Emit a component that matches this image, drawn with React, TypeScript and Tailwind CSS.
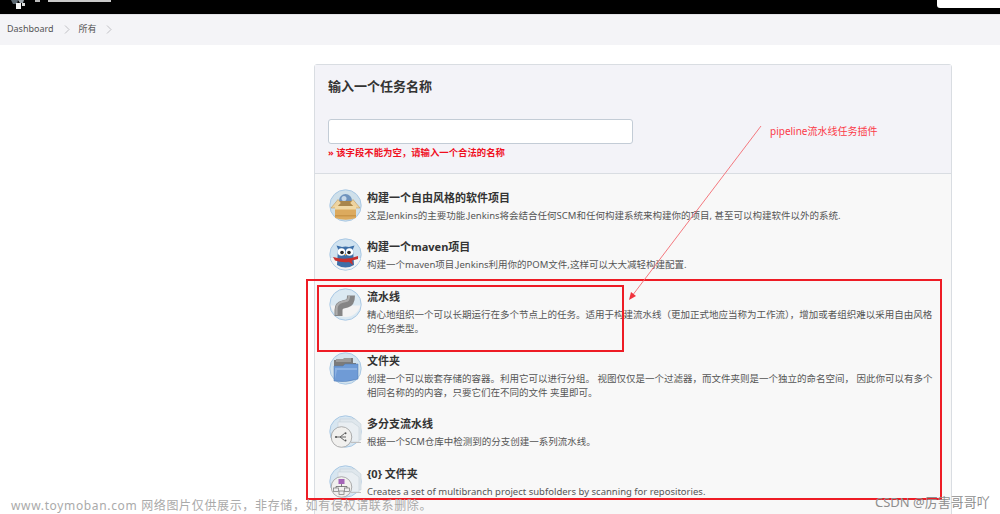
import React from "react";

const cjk = { fontFamily: '"Noto Sans", "Noto Sans CJK SC", sans-serif' };

function Ring({ children, bg = "#dbe9f2" }: { children: React.ReactNode; bg?: string }) {
  return (
    <svg width="33" height="33" viewBox="0 0 33 33" className="shrink-0 block">
      <circle cx="16.5" cy="16.5" r="15.7" fill={bg} stroke="#a9c8e4" strokeWidth="1" />
      {children}
    </svg>
  );
}

const FreeIcon = () => (
  <Ring bg="#cfe0ea">
    <circle cx="16.5" cy="11.5" r="6.5" fill="#6f93bd" />
    <circle cx="15" cy="9.5" r="2.5" fill="#c5d7e8" />
    <path d="M7 17 L10 12 H23 L26 17 Z" fill="#a8864c" />
    <path d="M2 19 L9 10.5 L12 14 L7 19 Z" fill="#edd3a0" stroke="#b98f4a" strokeWidth=".5" />
    <path d="M31 19 L24 10.5 L21 14 L26 19 Z" fill="#edd3a0" stroke="#b98f4a" strokeWidth=".5" />
    <path d="M6 17 H27 V29 Q17 32.5 6 29 Z" fill="#dcaa5e" />
    <rect x="6" y="17" width="21" height="3.5" fill="#f0d9a6" />
    <rect x="6" y="26" width="21" height="1.5" fill="#c99548" />
  </Ring>
);
const MavenIcon = () => (
  <Ring bg="#cfe2f0">
    <path d="M1.5 20 H31.5 A15.5 15.5 0 0 1 1.5 20 Z" fill="#f4f4f4" />
    <path d="M9 11 L7.5 7.5 L13 9 Q16.5 8 20 9 L25.5 7.5 L24 11 L25 27 Q16.5 32 8 27 Z" fill="#3d6fa8" />
    <circle cx="12.5" cy="14" r="3.8" fill="#fff" />
    <circle cx="20.5" cy="14" r="3.8" fill="#fff" />
    <circle cx="13" cy="14.5" r="1.8" fill="#222" />
    <circle cx="20" cy="14.5" r="1.8" fill="#222" />
    <path d="M15.5 16 L17.5 16 L16.5 18 Z" fill="#e8a33a" />
    <path d="M4 19 Q16.5 23 29 18 L29 21 L23 22.5 L24 27 L20 24 Q13 25 6 22.5 Z" fill="#c8302e" />
  </Ring>
);
const PipeIcon = () => (
  <Ring bg="#dbe9f2">
    <path d="M1.5 17.5 H31.5 A15.5 15.5 0 0 1 1.5 17.5 Z" fill="#f3f3f3" />
    <path d="M9.5 28 L9.5 22 Q9.5 17.5 14 16.5 L18 15.5 Q22 14.5 22 7.5" stroke="#858585" strokeWidth="8" fill="none" />
    <path d="M7.5 27 L7.5 21 Q7.5 15.5 13 14 L17 13 Q20 12.5 20 8" stroke="#adadad" strokeWidth="2.2" fill="none" />
  </Ring>
);
const FolderIcon = () => (
  <Ring bg="#d3e3ee">
    <path d="M5 8 H14 L16 6 H24 V11 H27 V24 H5 Z" fill="#7b7b7b" />
    <path d="M7 7 H14 L15 6 H22 V10 H7 Z" fill="#9a9a9a" />
    <path d="M5 29 L5 14 H14 L16 12 H29 V27 Q17 31 5 29 Z" fill="#6f9bd6" stroke="#4f78b0" strokeWidth=".5" />
    <path d="M6 27 L6 16 H28 V18 H8 Z" fill="#8cb1e2" />
  </Ring>
);
const StackBase = () => (
  <>
    <path d="M11 4 H26 L32 9 V25 H11 Z" fill="#dfe7ed" stroke="#c6d1d9" strokeWidth=".6" />
    <path d="M9 7 H23 L30 12 V27 H9 Z" fill="#e9eef2" stroke="#c6d1d9" strokeWidth=".6" />
    <path d="M22 28 L32 28 L32 27 L22 27 Z" fill="#c0c0c0" />
    <circle cx="12.5" cy="22" r="10.3" fill="#f1f0ee" stroke="#9b9b9b" strokeWidth=".8" />
  </>
);
const BranchIcon = () => (
  <Ring bg="#d7e6f1">
    <StackBase />
    <path d="M7 22 H17 M11 22 L15.5 18.5 M11 22 L15.5 25.5" stroke="#666" strokeWidth="1" fill="none" />
    <circle cx="7" cy="22" r="1.1" fill="#555" />
    <circle cx="16.5" cy="18.2" r="1" fill="#555" />
    <circle cx="16.5" cy="25.5" r="1" fill="#555" />
  </Ring>
);
const OrgIcon = () => (
  <Ring bg="#d7e6f1">
    <StackBase />
    <rect x="9.5" y="14" width="6" height="5" fill="#a565b8" />
    <path d="M12.5 19 V21.5 M7 23 V21.5 H18 V23" stroke="#666" strokeWidth=".8" fill="none" />
    <rect x="4.5" y="23" width="5" height="3.5" fill="#eee" stroke="#777" strokeWidth=".7" />
    <rect x="15.5" y="23" width="5" height="3.5" fill="#eee" stroke="#777" strokeWidth=".7" />
    <rect x="10" y="26" width="5" height="3.5" fill="#eee" stroke="#777" strokeWidth=".7" />
  </Ring>
);

function Item({ icon, title, desc, gap = "mb-4" }: { icon: React.ReactNode; title: string; desc: string; gap?: string }) {
  return (
    <div className={`flex gap-[5px] ${gap}`}>
      {icon}
      <div className="flex-1 min-w-0 pt-px">
        <div className="text-[11px] leading-4 font-bold text-[#333]">{title}</div>
        <div className="mt-[3px] text-[9.5px] leading-[14px] text-[#555]">{desc}</div>
      </div>
    </div>
  );
}

const Chevron = () => (
  <svg width="6" height="9" viewBox="0 0 6 9" className="block">
    <path d="M1 .5 L5 4.5 L1 8.5" stroke="#b4b4b8" strokeWidth=".8" fill="none" />
  </svg>
);

export default function App() {
  return (
    <div className="relative w-[1000px] h-[514px] overflow-hidden bg-white" style={cjk}>
      {/* top bar */}
      <div className="h-[14px] bg-black flex justify-between items-start">
        <div className="flex items-start pl-[9px] gap-[8px]">
          <svg width="18" height="10" viewBox="0 0 18 10" className="block">
            <path d="M2 0 H9 L8 4 H4 Z" fill="#5b6770" />
            <path d="M9 0 H15 L14 3 H11 Z" fill="#9aa3aa" />
            <rect x="7" y="3" width="5" height="6" fill="#f4f4f4" />
            <rect x="13" y="3" width="3" height="3" fill="#ddd" />
          </svg>
          <svg width="76" height="3" viewBox="0 0 76 3" className="block">
            <rect x="0" y="0" width="5" height="2" fill="#bbb" />
            <rect x="13" y="0" width="63" height="2" fill="#c9c9c9" />
          </svg>
        </div>
        <div className="w-[63px] h-[8px] bg-white rounded-bl-[3px]" />
      </div>

      {/* breadcrumb */}
      <div className="h-[31px] bg-[#f4f4f7] border-t border-[#e4e4e8] flex items-center pl-[7px] pb-[2px] text-[9px] text-[#555]">
        <span>Dashboard</span>
        <span className="ml-[10px]"><Chevron /></span>
        <span className="ml-[9px]">所有</span>
        <span className="ml-[9px]"><Chevron /></span>
      </div>

      {/* panel */}
      <div className="ml-[314px] mt-[19px] w-[638px] border border-[#d9dde2] rounded-t-[3px] bg-[#f8f8f8]">
        <div className="h-[109px] bg-[#f3f3f8] border-b border-[#d9dde2] pl-[13px] pt-[12px]">
          <div className="text-[13px] leading-[18px] font-bold text-[#333]">输入一个任务名称</div>
          <div className="mt-[24px] w-[305px] h-[25px] bg-white border border-[#c3ccd6] rounded-[3px]" />
          <div className="mt-[2px] text-[9.4px] leading-[13px] font-bold text-[#f00f1e]">» 该字段不能为空，请输入一个合法的名称</div>
        </div>
        <div className="pt-[15px] pl-[14px] pr-[18px]">
          <Item icon={<FreeIcon />} title="构建一个自由风格的软件项目" desc="这是Jenkins的主要功能.Jenkins将会结合任何SCM和任何构建系统来构建你的项目, 甚至可以构建软件以外的系统." gap="mb-[15px]" />
          <Item icon={<MavenIcon />} title="构建一个maven项目" desc="构建一个maven项目.Jenkins利用你的POM文件,这样可以大大减轻构建配置." />
          <Item icon={<PipeIcon />} title="流水线" desc="精心地组织一个可以长期运行在多个节点上的任务。适用于构建流水线（更加正式地应当称为工作流），增加或者组织难以采用自由风格的任务类型。" />
          <Item icon={<FolderIcon />} title="文件夹" desc="创建一个可以嵌套存储的容器。利用它可以进行分组。 视图仅仅是一个过滤器，而文件夹则是一个独立的命名空间， 因此你可以有多个相同名称的的内容，只要它们在不同的文件 夹里即可。" gap="mb-[15px]" />
          <Item icon={<BranchIcon />} title="多分支流水线" desc="根据一个SCM仓库中检测到的分支创建一系列流水线。" />
          <Item icon={<OrgIcon />} title="{0} 文件夹" desc="Creates a set of multibranch project subfolders by scanning for repositories." />
        </div>
      </div>

      {/* annotations */}
      <div className="absolute left-[306px] top-[279px] w-[636px] h-[221px] border-2 border-[#ee1c25]" />
      <div className="absolute left-[317px] top-[285px] w-[307px] h-[67px] border-2 border-[#ee1c25]" />
      <svg className="absolute left-[625px] top-[120px]" width="140" height="185" viewBox="0 0 140 185">
        <path d="M136 6 L7 176" stroke="#f36a70" strokeWidth="0.9" fill="none" />
        <path d="M4 180 L6 172 L11 176 Z" fill="#f0323c" />
      </svg>
      <div className="absolute left-[770px] top-[124px] text-[10px] leading-[14px] text-[#fb3a48]">pipeline流水线任务插件</div>

      {/* watermarks */}
      <div className="absolute left-[11px] top-[497px] text-[12px] leading-[18px] tracking-[0.65px] text-[#aaa] whitespace-nowrap">www.toymoban.com 网络图片仅供展示，非存储，如有侵权请联系删除。</div>
      <div className="absolute left-[875px] top-[494px] text-[13px] leading-4 text-[#8e8e8e] whitespace-nowrap">CSDN @厉害哥哥吖</div>
    </div>
  );
}
